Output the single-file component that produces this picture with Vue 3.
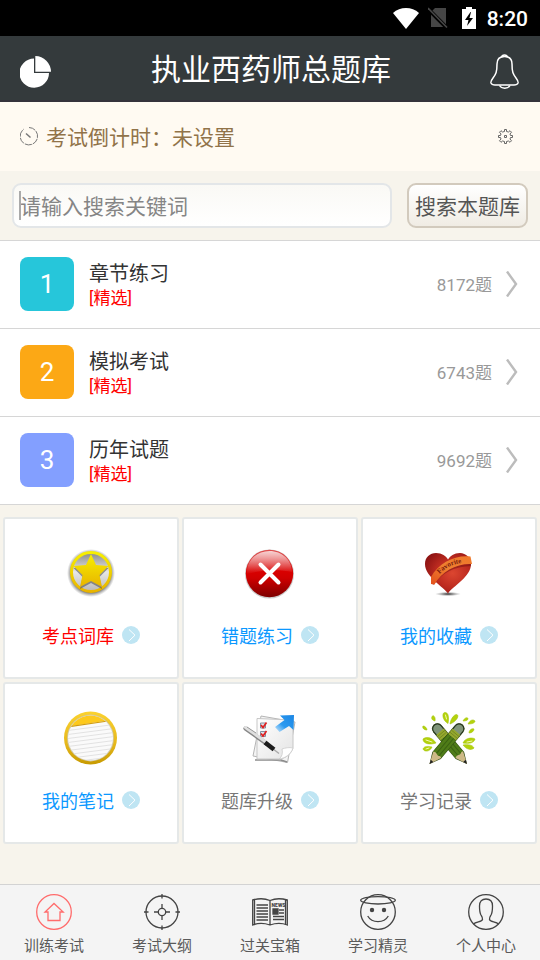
<template>
  <div class="page">
    <div class="status-bar">
      <svg class="wifi" viewBox="0 0 26 21"><path d="M13 21 0 5C7-1.600 19-1.600 26 5Z" fill="#fff" /></svg>
      <svg class="sim" viewBox="0 0 20 22">
        <path d="M7 1h11v19H3V5Z" fill="#464646" />
        <path d="M0 2 19 21" stroke="#000" stroke-width="4" />
        <path d="M0 1 19 20.500" stroke="#464646" stroke-width="1.600" />
      </svg>
      <svg class="battery" viewBox="0 0 14 22">
        <path d="M4 0h6v2h4v20H0V2h4Z" fill="#fff" />
        <path d="M8.500 5 3 13h3.500L5 19l6-8H7.500L9 5Z" fill="#000" />
      </svg>
      <span class="time">8:20</span>
    </div>

    <header class="header">
      <button class="icon-btn" type="button" aria-label="统计">
        <svg width="32" height="32" viewBox="0 0 32 32">
          <path d="M14 2.500V17h15A14.800 14.600 0 1 1 14 2.500Z" fill="#fff" />
          <path d="M15.300 0A16 16 0 0 1 31 15.800H15.300Z" fill="#fff" />
        </svg>
      </button>
      <h1>执业西药师总题库</h1>
      <button class="icon-btn" type="button" aria-label="消息">
        <svg width="30" height="36" viewBox="0 0 30 36" fill="none" stroke="#fff" stroke-width="1.500">
          <path d="M11.500 3.500C12 0 17 0 17.500 3.500" />
          <path d="M14.500 2.500C9 2.500 7 6 7 10c0 8-1 10-4 14-1.500 2-2.500 3.500-2 5 .6 1.600 2 2 4 2h19c2 0 3.400-.4 4-2 .5-1.500-.5-3-2-5-3-4-4-6-4-14 0-4-2-7.500-7.500-7.500Z" />
          <path d="M9.500 31.500c2 3.500 8.500 3.500 10.500 0" />
        </svg>
      </button>
    </header>

    <div class="countdown">
      <svg class="clock" width="19" height="19" viewBox="0 0 19 19" fill="none" stroke="#777">
        <path d="M9 .5A8.700 8.700 0 1 1 4 2" stroke-dasharray="7 1" />
        <path d="M6 6.500 10.500 10.500" stroke-width="1.500" />
      </svg>
      <span class="countdown-text">考试倒计时：未设置</span>
      <button class="icon-btn" type="button" aria-label="设置">
        <svg width="15" height="15" viewBox="0 0 15 15" fill="none" stroke="#666">
          <path d="M6.500.5h2v2l2 .5 1.500-1.300 1.500 1.500L12 5l.5 1.500h2v2h-2L12 10l1.500 1.800-1.500 1.500-1.500-1.300-2 .5v2h-2v-2l-2-.5L3 13.300l-1.500-1.500L3 10l-.5-1.500h-2v-2h2L3 5 1.500 3.200 3 1.700 4.500 3l2-.5Z" />
          <path d="M6.500 6.500h2v2h-2Z" />
        </svg>
      </button>
    </div>

    <form class="search" @submit.prevent>
      <div class="search-box">
        <input v-model="keyword" type="text" placeholder="请输入搜索关键词" aria-label="请输入搜索关键词" />
      </div>
      <button class="search-btn" type="submit">搜索本题库</button>
    </form>

    <ul class="list">
      <li v-for="(item, i) in items" :key="item.title">
        <a href="#" class="row">
          <span :class="['num', `num-${i + 1}`]">{{ i + 1 }}</span>
          <span class="row-main">
            <span class="row-title">{{ item.title }}</span>
            <span class="row-tag">[精选]</span>
          </span>
          <span class="row-count">{{ item.count }}题</span>
          <svg width="12" height="26" viewBox="0 0 12 26" fill="none" stroke="#bcbcbc" stroke-width="2.400">
            <path d="M1 .5 10 13 1 25.500" />
          </svg>
        </a>
      </li>
    </ul>

    <div class="grid">
      <a v-for="t in tiles" :key="t.label" href="#" class="tile">
        <svg v-if="t.icon === 'star'" width="54" height="54" viewBox="0 0 54 54">
          <defs>
            <linearGradient id="gold" x1="0" y1="0" x2="0" y2="1">
              <stop offset="0" stop-color="#f7ef00" />
              <stop offset="1" stop-color="#e8b400" />
            </linearGradient>
            <radialGradient id="starShade">
              <stop offset=".8" stop-color="#444" stop-opacity=".8" />
              <stop offset="1" stop-color="#777" stop-opacity="0" />
            </radialGradient>
            <linearGradient id="starHole" x1="0" y1="0" x2="0" y2="1">
              <stop offset="0" stop-color="#8b8b8b" />
              <stop offset=".5" stop-color="#e8e8e8" />
              <stop offset="1" stop-color="#b9b9b9" />
            </linearGradient>
          </defs>
          <circle cx="27" cy="27" r="24" fill="url(#starShade)" />
          <circle cx="27" cy="26" r="19" fill="url(#starHole)" />
          <circle cx="27" cy="26" r="19.500" fill="none" stroke="url(#gold)" stroke-width="3" />
          <path d="m27 9 5 11 12.500 1-9 9 2.500 12-11-6-11 6 2.500-12-9-9L22 20Z" transform="translate(0 1)" fill="#555" opacity=".6" />
          <path d="m27 8 5 11 12.500 1-9 9L38 41l-11-6-11 6 2.500-12-9-9L22 19Z" fill="url(#gold)" />
        </svg>

        <svg v-else-if="t.icon === 'wrong'" width="54" height="54" viewBox="0 0 54 54">
          <defs>
            <linearGradient id="redBall" x1="0" y1="0" x2="0" y2="1">
              <stop offset="0" stop-color="#e05050" />
              <stop offset=".45" stop-color="#d90000" />
              <stop offset=".6" stop-color="#cf0000" />
              <stop offset="1" stop-color="#7d0000" />
            </linearGradient>
            <linearGradient id="redShine" x1="0" y1="0" x2="0" y2="1">
              <stop offset="0" stop-color="#fff" stop-opacity=".75" />
              <stop offset="1" stop-color="#fff" stop-opacity="0" />
            </linearGradient>
          </defs>
          <circle cx="26.500" cy="28" r="24.500" fill="#999" opacity=".5" />
          <circle cx="26.500" cy="27.500" r="23.700" fill="url(#redBall)" />
          <path d="M4 26C4 14 14 5 26.500 5S49 14 49 26C36 23 18 24 4 28Z" fill="url(#redShine)" />
          <path d="m17.500 18.500 18 18m0-18-18 18" stroke="#fff" stroke-width="4" stroke-linecap="round" />
        </svg>

        <svg v-else-if="t.icon === 'heart'" width="54" height="54" viewBox="0 0 54 54">
          <defs>
            <radialGradient id="heartRed" cx=".6" cy=".5" r=".65">
              <stop offset="0" stop-color="#dc4630" />
              <stop offset=".55" stop-color="#bd2b20" />
              <stop offset="1" stop-color="#8f1414" />
            </radialGradient>
            <radialGradient id="heartShade">
              <stop offset="0" stop-color="#222" />
              <stop offset="1" stop-color="#888" stop-opacity="0" />
            </radialGradient>
            <linearGradient id="ribbon" x1="0" y1="1" x2="1" y2="0">
              <stop offset="0" stop-color="#e4501c" />
              <stop offset=".5" stop-color="#ee8030" />
              <stop offset="1" stop-color="#f0782a" />
            </linearGradient>
            <path id="ribbonLine" d="M17.500 28C24 21 32 17.500 44 16.500" />
          </defs>
          <ellipse cx="26" cy="48" rx="13" ry="2.200" fill="url(#heartShade)" />
          <path d="M26 47.500C22 41 3 31 3 18 3 11 8 7 14 7c6 0 10 3 12 6.500C28 10 32 7 38 7c6 0 11 5 11 11 0 13-18 22-23 29.500Z" fill="url(#heartRed)" />
          <path d="M11 38.500C19 26 33 19.500 49 19" fill="none" stroke="#701010" stroke-width="2" opacity=".5" />
          <path d="M9 31C17 17 32 9 48.500 10.500L50 18C35 17 20 25 12.500 38.500L9 38Z" fill="url(#ribbon)" />
          <text class="ribbon-text"><textPath href="#ribbonLine">Favorite</textPath></text>
        </svg>

        <svg v-else-if="t.icon === 'note'" width="54" height="54" viewBox="0 0 54 54">
          <defs>
            <linearGradient id="noteRing" x1="0" y1="0" x2="0" y2="1">
              <stop offset="0" stop-color="#fbd22e" />
              <stop offset=".6" stop-color="#e6b81c" />
              <stop offset="1" stop-color="#c79a00" />
            </linearGradient>
            <clipPath id="noteClip"><circle cx="26.500" cy="27" r="22.500" /></clipPath>
          </defs>
          <circle cx="26.500" cy="27" r="26.500" fill="url(#noteRing)" />
          <circle cx="26.500" cy="27" r="23.400" fill="#d0c8a8" />
          <g clip-path="url(#noteClip)">
            <path d="M0 0h54v54H0Z" fill="#fafafa" />
            <path d="M0 0h54v8L0 16Z" fill="#fdc91c" />
            <path d="M0 16.500 54 8.500" stroke="#d09c10" stroke-width="1.200" />
            <path
              v-for="n in 9"
              :key="n"
              :d="`M0 ${16 + n * 4} 54 ${9 + n * 4}`"
              stroke="#e2e2e2"
            />
          </g>
        </svg>

        <svg v-else-if="t.icon === 'upgrade'" width="54" height="54" viewBox="0 0 54 54">
          <defs>
            <linearGradient id="paper" x1="0" y1="0" x2="1" y2="1">
              <stop offset="0" stop-color="#fff" />
              <stop offset="1" stop-color="#e4e4e4" />
            </linearGradient>
            <linearGradient id="blueArrow" x1="1" y1="0" x2="0" y2="1">
              <stop offset="0" stop-color="#1b86e4" />
              <stop offset=".6" stop-color="#2b9af0" />
              <stop offset="1" stop-color="#5bb8ff" stop-opacity=".3" />
            </linearGradient>
          </defs>
          <path d="m18 5 34 6-7.500 40.500L10 45Z" fill="#f4f4f4" stroke="#b5b5b5" />
          <path d="M12 49h26l6 2" fill="none" stroke="#8c8c8c" stroke-width="1.600" />
          <path d="M14 7.500 50 9v28c-2 6-7 10-13 11H14Z" fill="url(#paper)" stroke="#c6c6c6" />
          <path d="M50 37c-4-1-8 0-11 1 1 4 0 8-3 10 7-1 12-5 14-11Z" fill="#fff" stroke="#ccc" stroke-width=".8" />
          <path d="M17.500 12h5v5h-5ZM17.500 20.500h5v5h-5Z" fill="#dbe2ea" stroke="#8490a0" />
          <path d="m18 14 2 2.500 3.500-5M18 22.500l2 2.500 3.500-5" fill="none" stroke="#e02020" stroke-width="1.700" />
          <path d="m37 4.500 14-.5-.5 15-4.500-4-9.500 6-4.500-5 9.500-7Z" fill="url(#blueArrow)" />
          <path d="m1 17 24 17 11 8.500" stroke="#aaa" stroke-width="1.500" fill="none" />
          <path d="m2.500 17.500 21 15" stroke="#888" stroke-width="4.200" stroke-linecap="round" />
          <path d="m2.500 16.500 21 15" stroke="#e0e0e0" stroke-width="3" stroke-linecap="round" />
          <path d="m4 16 9 6" stroke="#999" />
          <path d="m22 31.500 9 7" stroke="#1d1d1d" stroke-width="4.600" />
        </svg>

        <svg v-else width="54" height="54" viewBox="0 0 54 54">
          <g v-for="side in ['right', 'left']" :key="side" :transform="pencilTransform[side]">
            <path d="M-5.500-11v-35a5.500 5.500 0 0 1 11 0v35L0 0Z" fill="#2f4a14" />
            <path d="M-4.700-40v-6a4.700 4.700 0 0 1 9.400 0v6Z" fill="#7f9479" stroke="#263420" />
            <path d="M-5-42H5v7H-5Z" fill="#95a82e" />
            <path d="M-5-40H5M-5-37.500H5" stroke="#6f8420" stroke-width=".8" />
            <path d="M-5-35H5v24H-5Z" fill="#4f7c18" />
            <path d="M-1.500-35v24M2-35v24" stroke="#3a6212" />
            <path d="M-5-12 0 0 5-12C3-14 2-11 0-12s-3-1-5 0Z" fill="#cdb987" />
            <path d="M-1.700-4 0 0 1.700-4Z" fill="#222" />
          </g>
          <g fill="#b4d20c" stroke="#a2c40a" stroke-width=".6">
            <path d="M26 12.500C20 9 20 2 22.500 1.500 27 1 27 8 26 12.500ZM28 13C29 6 34 2 35.500 4c1.500 2-2 7-7.500 9Z" />
            <path d="M13 10C9 9 9 6 11 4.500c2 1 2.500 3 2 5.500ZM5 19C2 19 0 17 1 15c2 0 4 2 4 4Z" />
            <path d="M14 32C8 34 1 33 1 28c4-3 10-1 13 4ZM10 36C8 41 2 41 1 38c1-3 5-3 9-2Z" />
            <path d="M41 10c2-4 5-4 5-2 0 1-2 2-5 2ZM46 13c2-4 5-5 7-3 0 2-3 3-7 3ZM47 22c0-3 3-5 5-4 0 2-2 4-5 4Z" />
            <path d="M41 32c2-5 9-6 12-4-1 4-6 5-12 4ZM41 34c5-1 10 0 11 3-3 3-8 1-11-3Z" />
          </g>
          <path d="m4 29 6 2M23.500 4l1 4M4 38l3-1M45 31l5-1" stroke="#f2f8b0" stroke-linecap="round" />
        </svg>

        <span :class="['tile-label', t.tone]">
          {{ t.label }}
          <svg class="more" width="18" height="18" viewBox="0 0 18 18">
            <circle cx="9" cy="9" r="9" fill="#bfe5f3" />
            <path d="m7 3.500 6 5.700-6 5.800" fill="none" stroke="#fff" />
          </svg>
        </span>
      </a>
    </div>

    <nav class="tabbar">
      <a
        v-for="tab in tabs"
        :key="tab.label"
        href="#"
        :class="['tab', { active: tab.icon === 'home' }]"
      >
        <svg width="36" height="36" viewBox="0 0 36 36" fill="none" stroke="currentColor" stroke-width="1.300">
          <template v-if="tab.icon === 'home'">
            <circle cx="18" cy="18" r="17.300" />
            <path d="M9 18h3v8.500h12V18h3.200L18 9.500Z" />
          </template>
          <template v-else-if="tab.icon === 'target'">
            <circle cx="18" cy="18" r="16" />
            <circle cx="18" cy="18" r="3.700" />
            <path d="M18 0v4.500M18 31.500V36M0 18h4.500M31.500 18H36M18 10v4.300M18 21.700V26M10 18h4.300M21.700 18H26" />
          </template>
          <template v-else-if="tab.icon === 'book'">
            <path d="M18 6.500C12 4 6 4.500.7 6v25C6 29 12 29 18 31c6-2 12-2 17.300 0V6C30 4.500 24 4 18 6.500ZM18 6.500V31M2.500 6v24M33.500 6v24" />
            <path d="M4.500 11H16M4.500 14H16M4.500 17H16M4.500 20H16M4.500 23H16M4.500 26H16M27 16h5M27 19h5M21 22.500h11M21 25.500h11" />
            <path d="M21 15h5v5h-5Z" fill="currentColor" />
            <text class="news" x="26.500" y="13">NEWS</text>
          </template>
          <template v-else-if="tab.icon === 'angel'">
            <circle cx="18" cy="18" r="17.300" />
            <ellipse cx="18" cy="6.300" rx="17.300" ry="3.700" />
            <circle cx="12" cy="16" r="2.200" fill="currentColor" stroke="none" />
            <circle cx="24" cy="16" r="2.200" fill="currentColor" stroke="none" />
            <path d="M7.700 22C12 29.500 24 29.500 28.300 22" />
          </template>
          <template v-else>
            <circle cx="18" cy="18" r="17.300" />
            <path d="M5.500 30C8 27.500 14 28 14.500 25.500c.3-2-.5-3-1.500-4.500-1.500-2.500-1.500-5-1.500-9C11.500 7.500 14 5 18 5s6.500 2.500 6.500 7c0 4 0 6.500-1.500 9-1 1.500-1.800 2.500-1.500 4.500.5 2.500 6.500 2 9 4.500" />
          </template>
        </svg>
        <span>{{ tab.label }}</span>
      </a>
    </nav>
  </div>
</template>

<script setup>
import { ref } from 'vue'

const keyword = ref('')

const items = [
  { title: '章节练习', count: 8172 },
  { title: '模拟考试', count: 6743 },
  { title: '历年试题', count: 9692 },
]

const tiles = [
  { label: '考点词库', icon: 'star', tone: 'red' },
  { label: '错题练习', icon: 'wrong', tone: 'blue' },
  { label: '我的收藏', icon: 'heart', tone: 'blue' },
  { label: '我的笔记', icon: 'note', tone: 'blue' },
  { label: '题库升级', icon: 'upgrade', tone: 'gray' },
  { label: '学习记录', icon: 'pencils', tone: 'gray' },
]

const tabs = [
  { label: '训练考试', icon: 'home' },
  { label: '考试大纲', icon: 'target' },
  { label: '过关宝箱', icon: 'book' },
  { label: '学习精灵', icon: 'angel' },
  { label: '个人中心', icon: 'user' },
]

const pencilTransform = {
  right: 'translate(45 53) rotate(-40)',
  left: 'translate(7.500 53) rotate(40)',
}
</script>

<style>
body {
  background: #f7f4ec;
}
</style>

<style scoped>
.page {
  display: flex;
  flex-direction: column;
  min-height: 100vh;
  background: #f7f4ec;
  font-family: Roboto, "Noto Sans CJK SC", sans-serif;
  color: #333;
}

a {
  color: inherit;
  text-decoration: none;
}

svg {
  display: block;
  flex: none;
}

.icon-btn {
  padding: 0;
  border: 0;
  background: none;
}

.status-bar {
  display: flex;
  align-items: center;
  justify-content: flex-end;
  height: 36px;
  padding-right: 12px;
  background: #000;
  color: #fff;
}

.wifi {
  width: 26px;
  height: 21px;
}

.sim {
  width: 20px;
  height: 22px;
  margin-left: 9px;
}

.battery {
  width: 14px;
  height: 22px;
  margin: 0 11px 0 14px;
}

.time {
  padding-top: 2px;
  font-size: 21px;
  font-weight: 500;
}

.header {
  display: flex;
  align-items: center;
  justify-content: space-between;
  height: 56px;
  padding: 8px 20px 0;
  border-bottom: 2px solid #35333b;
  background: #343a3c;
  color: #fff;
}

.header h1 {
  margin: 0 0 4px;
  font-size: 30px;
  font-weight: 400;
  line-height: 44px;
}

.countdown {
  display: flex;
  align-items: center;
  gap: 7px;
  height: 69px;
  padding: 0 27px 0 20px;
  background: #fffaf2;
}

.countdown-text {
  flex: 1;
  padding-top: 2px;
  font-size: 21px;
  line-height: 30px;
  color: #917349;
}

.search {
  display: flex;
  gap: 15px;
  padding: 12px;
}

.search-box {
  position: relative;
  flex: 1;
}

.search-box::before {
  content: "";
  position: absolute;
  left: 7px;
  top: 8px;
  width: 2px;
  height: 29px;
  background: #aaa;
}

.search input {
  box-sizing: border-box;
  width: 100%;
  height: 45px;
  padding: 2px 6px 0;
  border: 2px solid #e3e6e8;
  border-radius: 9px;
  outline: 0;
  background: linear-gradient(#faf9f5, #fff);
  font: inherit;
  font-size: 21px;
}

.search input::placeholder {
  color: #858585;
}

.search-btn {
  height: 45px;
  padding: 0 6px 2px;
  border: 2px solid #d2cabd;
  border-radius: 9px;
  background: linear-gradient(#fff, #f0ece4);
  font: inherit;
  font-size: 21px;
  color: #555;
}

.list {
  margin: 0;
  padding: 0;
  list-style: none;
  border-top: 1px solid #d6d6d6;
  background: #fff;
}

.list li {
  border-bottom: 1px solid #d6d6d6;
}

.row {
  display: flex;
  align-items: center;
  height: 85px;
  padding: 0 22px 2px 20px;
}

.num {
  width: 54px;
  border-radius: 8px;
  font-size: 26px;
  line-height: 54px;
  text-align: center;
  color: #fff;
}

.num-1 {
  background: #26c6da;
}

.num-2 {
  background: #fca815;
}

.num-3 {
  background: #839fff;
}

.row-main {
  display: flex;
  flex: 1;
  flex-direction: column;
  margin-left: 15px;
  padding-top: 2px;
}

.row-title {
  font-size: 20px;
  line-height: 26px;
}

.row-tag {
  font-size: 17px;
  line-height: 22px;
  color: #f00;
}

.row-count {
  margin-right: 14px;
  font-size: 17px;
  color: #999;
}

.grid {
  display: grid;
  grid-template-columns: repeat(3, 1fr);
  gap: 3px;
  padding: 12px 3px;
}

.tile {
  display: flex;
  flex-direction: column;
  align-items: center;
  gap: 23px;
  padding: 27px 0;
  border: 2px solid #e5e8e8;
  border-radius: 3px;
  background: #fff;
}

.tile-label {
  display: flex;
  align-items: center;
  gap: 8px;
  font-size: 18px;
  line-height: 27px;
}

.more {
  margin-bottom: 4px;
}

.red {
  color: #f00;
}

.blue {
  color: #0b98ff;
}

.gray {
  color: #777;
}

.ribbon-text {
  font-family: "Liberation Serif", serif;
  font-size: 7px;
  font-weight: 700;
  fill: #7a1a0c;
}

.tabbar {
  display: flex;
  margin-top: auto;
  border-top: 1px solid #d3d3d3;
  background: #f4f4f4;
}

.tab {
  display: flex;
  flex: 1;
  flex-direction: column;
  align-items: center;
  gap: 5px;
  padding: 9px 0 3px;
  font-size: 15px;
  line-height: 22px;
  color: #444;
}

.tab span {
  color: #5a5a5a;
}

.tab.active svg {
  color: #ff6c6c;
}

.news {
  font-size: 5px;
  font-weight: 900;
  text-anchor: middle;
  fill: currentColor;
  stroke: none;
}
</style>
